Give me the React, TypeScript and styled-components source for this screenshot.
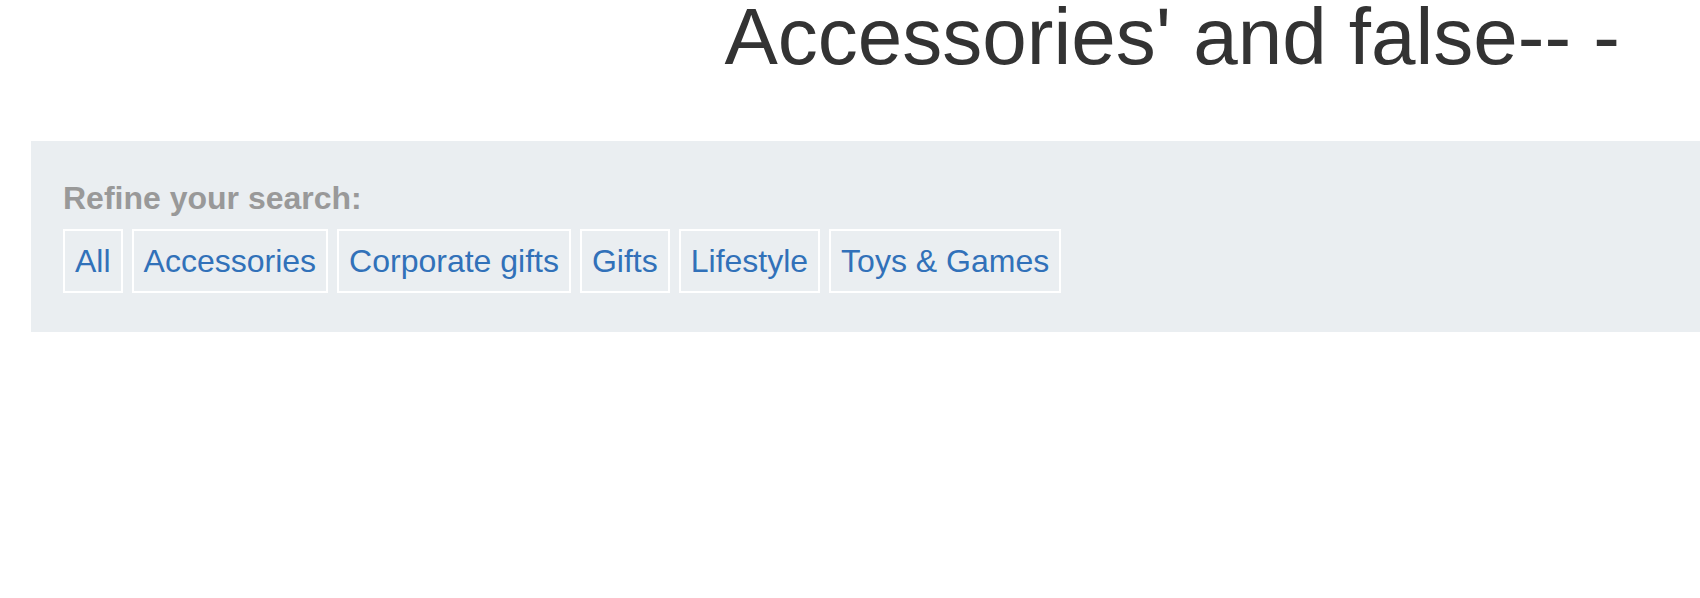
import React from "react";
import styled, { createGlobalStyle } from "styled-components";

const GlobalStyle = createGlobalStyle`
  html, body {
    margin: 0;
    padding: 0;
    background: #ffffff;
    font-family: "Liberation Sans", Arial, sans-serif;
  }
`;

const Page = styled.div`
  display: flex;
  flex-direction: column;
  width: 100%;
  overflow: hidden;
`;

const Header = styled.header`
  display: flex;
  justify-content: flex-end;
  padding-right: 80px;
  height: 141px;
`;

const Title = styled.h1`
  margin: 0;
  font-family: "Liberation Sans", Arial, sans-serif;
  font-weight: 400;
  font-size: 80px;
  line-height: 74px;
  color: #333333;
  white-space: nowrap;
`;

const Panel = styled.section`
  margin-left: 31px;
  padding: 39px 32px;
  background: #eaeef1;
  display: flex;
  flex-direction: column;
  gap: 12px;
`;

const Label = styled.div`
  font-size: 32px;
  font-weight: 700;
  line-height: 37px;
  color: #999999;
`;

const Filters = styled.nav`
  display: flex;
  flex-wrap: wrap;
  gap: 9px;
`;

const Filter = styled.a`
  display: block;
  border: 2px solid #ffffff;
  padding: 12px 10px;
  font-size: 32px;
  line-height: 36px;
  color: #3171b9;
  text-decoration: none;
  white-space: nowrap;
`;

const categories = ["All", "Accessories", "Corporate gifts", "Gifts", "Lifestyle", "Toys & Games"];

export default function App() {
  return (
    <Page>
      <GlobalStyle />
      <Header>
        <Title>Accessories' and false-- -</Title>
      </Header>
      <Panel>
        <Label>Refine your search:</Label>
        <Filters>
          {categories.map((c) => (
            <Filter key={c} href="#">
              {c}
            </Filter>
          ))}
        </Filters>
      </Panel>
    </Page>
  );
}
